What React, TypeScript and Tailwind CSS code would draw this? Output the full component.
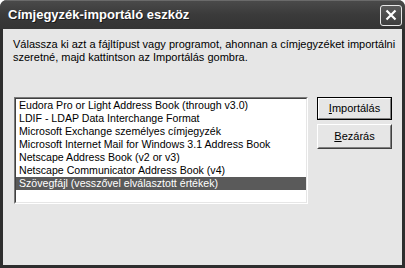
const items = [
  'Eudora Pro or Light Address Book (through v3.0)',
  'LDIF - LDAP Data Interchange Format',
  'Microsoft Exchange személyes címjegyzék',
  'Microsoft Internet Mail for Windows 3.1 Address Book',
  'Netscape Address Book (v2 or v3)',
  'Netscape Communicator Address Book (v4)',
  'Szövegfájl (vesszővel elválasztott értékek)',
];

function CloseButton() {
  return (
    <div className="flex h-[21px] w-[22px] items-center justify-center rounded-[3px] border border-[#e8e8e8] bg-gradient-to-b from-[#5a5a5a] to-[#3e3e3e]">
      <svg width="12" height="12" viewBox="0 0 12 12">
        <path d="M1.5 1.5 L10.5 10.5 M10.5 1.5 L1.5 10.5" stroke="#ffffff" strokeWidth="2.2" />
      </svg>
    </div>
  );
}

export default function App() {
  const selected = 6;

  return (
    <div className="flex h-[268px] w-[405px] flex-col overflow-hidden rounded-t-[7px] bg-[#2e2e2e] font-['Liberation_Sans',Arial,sans-serif]">
      <div className="flex h-[29px] shrink-0 items-center justify-between border-t border-[#6a6a6a] bg-gradient-to-b from-[#4a4a4a] via-[#3a3a3a] to-[#343434] pl-[8px] pr-[3px]">
        <span className="text-[13px] font-bold text-white [text-shadow:1px_1px_0_#1a1a1a]">Címjegyzék-importáló eszköz</span>
        <CloseButton />
      </div>

      <div className="mx-[3px] mb-[3px] flex flex-1 flex-col bg-[#e6e6e6] pl-[10px] pt-[9px]">
        <p className="text-[11px] leading-[13px] text-black">
          Válassza ki azt a fájltípust vagy programot, ahonnan a címjegyzéket importálni
          <br />
          szeretné, majd kattintson az Importálás gombra.
        </p>

        <div className="mt-[33px] flex gap-[9px] pl-px">
          <div className="h-[107px] w-[294px] border border-b-white border-l-[#7a7a7a] border-r-white border-t-[#7a7a7a] bg-white">
            <div className="h-full border border-b-[#e6e6e6] border-l-[#404040] border-r-[#e6e6e6] border-t-[#404040]">
              {items.map((item, i) => (
                <div
                  key={item}
                  className={
                    i === selected
                      ? 'h-[13px] whitespace-nowrap bg-[#5a5a5a] px-[3px] text-[10.6px] leading-[13px] text-white'
                      : 'h-[13px] whitespace-nowrap px-[3px] text-[10.6px] leading-[13px] text-black'
                  }
                >
                  {item}
                </div>
              ))}
            </div>
          </div>

          <div className="flex flex-col gap-[4px]">
            <button className="h-[23px] w-[75px] border border-black bg-[#e6e6e6] text-[11px] text-black">
              <div className="flex h-full items-center justify-center border border-b-[#808080] border-l-white border-r-[#808080] border-t-white">
                <span>
                  <span className="underline">I</span>mportálás
                </span>
              </div>
            </button>
            <button className="h-[25px] w-[75px] border border-b-[#404040] border-l-white border-r-[#404040] border-t-white bg-[#e6e6e6] text-[11px] text-black">
              <div className="flex h-full items-center justify-center border border-b-[#808080] border-l-[#e6e6e6] border-r-[#808080] border-t-[#e6e6e6]">
                <span>
                  <span className="underline">B</span>ezárás
                </span>
              </div>
            </button>
          </div>
        </div>
      </div>
    </div>
  );
}
